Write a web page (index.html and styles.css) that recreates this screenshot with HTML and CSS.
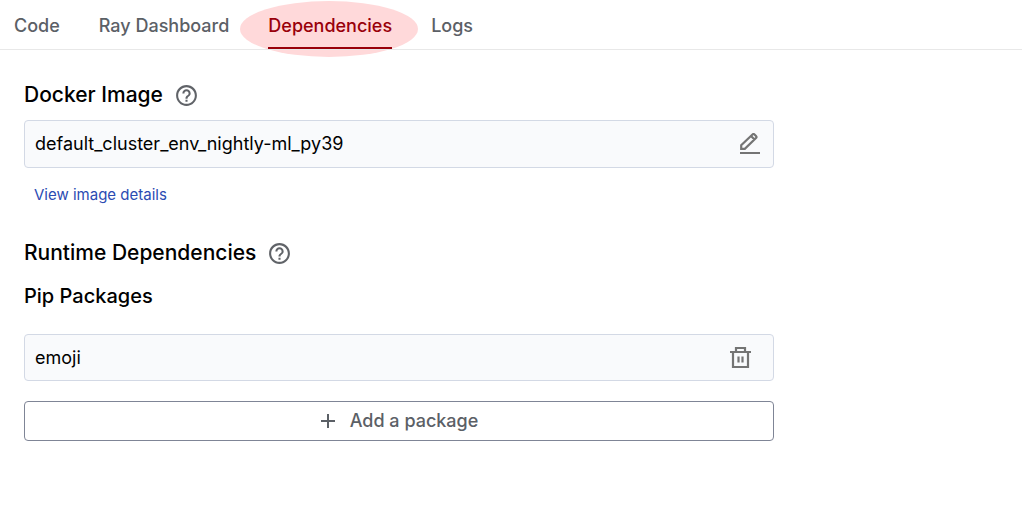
FILE: index.html
```html
<!DOCTYPE html>
<html lang="en">
<head>
<meta charset="utf-8">
<meta name="viewport" content="width=device-width, initial-scale=1">
<title>Dependencies</title>
<link rel="stylesheet" href="styles.css">
</head>
<body>
<nav class="tabs" aria-label="Workspace">
  <a class="tab" href="#code">Code</a>
  <a class="tab" href="#dashboard">Ray Dashboard</a>
  <a class="tab tab-active" href="#dependencies" aria-current="page">Dependencies</a>
  <a class="tab" href="#logs">Logs</a>
</nav>
<main class="content">
  <section class="docker">
    <div class="heading-row">
      <h2 class="heading" id="docker-label">Docker Image</h2>
      <button class="icon-button" type="button" aria-label="About Docker images">
        <svg class="help-icon" viewBox="0 0 24 24"><path d="M11 18h2v-2h-2v2zm1-16C6.480 2 2 6.480 2 12s4.480 10 10 10 10-4.480 10-10S17.520 2 12 2zm0 18c-4.410 0-8-3.590-8-8s3.590-8 8-8 8 3.590 8 8-3.590 8-8 8zm0-14c-2.210 0-4 1.790-4 4h2c0-1.100.9-2 2-2s2 .9 2 2c0 2-3 1.750-3 5h2c0-2.250 3-2.500 3-5 0-2.210-1.790-4-4-4z"/></svg>
      </button>
    </div>
    <div class="field field-image">
      <input class="field-input" type="text" aria-labelledby="docker-label" value="default_cluster_env_nightly-ml_py39" readonly>
      <button class="icon-button" type="button" aria-label="Edit image">
        <svg class="edit-icon" viewBox="0 0 20 22"><path d="M1.200 15.800V12.300L12.500 1.500q1-.9 2 0l1.500 1.500q1 1 0 2L4.800 15.800zM11 3l3.500 3.500" fill="none" stroke="currentColor" stroke-width="2.200"/><path d="M0 20h20" fill="none" stroke="currentColor" stroke-width="2"/></svg>
      </button>
    </div>
    <a class="details-link" href="#image">View image details</a>
  </section>
  <section class="runtime">
    <div class="heading-row">
      <h2 class="heading">Runtime Dependencies</h2>
      <button class="icon-button" type="button" aria-label="About runtime dependencies">
        <svg class="help-icon" viewBox="0 0 24 24"><path d="M11 18h2v-2h-2v2zm1-16C6.480 2 2 6.480 2 12s4.480 10 10 10 10-4.480 10-10S17.520 2 12 2zm0 18c-4.410 0-8-3.590-8-8s3.590-8 8-8 8 3.590 8 8-3.590 8-8 8zm0-14c-2.210 0-4 1.790-4 4h2c0-1.100.9-2 2-2s2 .9 2 2c0 2-3 1.750-3 5h2c0-2.250 3-2.500 3-5 0-2.210-1.790-4-4-4z"/></svg>
      </button>
    </div>
    <h3 class="heading subheading" id="pip-label">Pip Packages</h3>
    <div class="field field-package">
      <input class="field-input" type="text" aria-labelledby="pip-label" value="emoji">
      <button class="icon-button" type="button" aria-label="Remove package">
        <svg class="trash-icon" viewBox="0 0 22 22"><path d="M0 5h21M6 5V1h9v4M3 5v15h15V5M8.500 9.500v6M12.500 9.500v6" fill="none" stroke="currentColor" stroke-width="2.200"/></svg>
      </button>
    </div>
    <button class="add-button" type="button">
      <svg class="plus-icon" viewBox="0 0 16 16"><path d="M8 1v14M1 8h14" fill="none" stroke="currentColor" stroke-width="2"/></svg>
      Add a package
    </button>
  </section>
</main>
</body>
</html>
```
FILE: styles.css
```css
* {
  box-sizing: border-box;
}

body {
  margin: 0;
  background: #fff;
  color: #000;
  font-family: Inter, "Liberation Sans", sans-serif;
}

.tabs {
  display: flex;
  gap: 39px;
  padding: 0 14px;
  border-bottom: 1px solid #e8e8e8;
}

.tab {
  position: relative;
  padding: 14px 0 9px;
  border-bottom: 2px solid transparent;
  color: #5b6066;
  font-size: 18px;
  font-weight: 500;
  line-height: 24px;
  text-decoration: none;
}

.tab-active {
  border-color: #99000a;
  color: #99000a;
}

.tab-active::before {
  position: absolute;
  z-index: -1;
  inset: 1px -26px -10px -28px;
  border-radius: 50%;
  background: #ffd9da;
  content: "";
}

.content {
  max-width: 798px;
  padding: 31px 24px;
}

.heading-row {
  display: flex;
  align-items: center;
  gap: 11px;
}

.heading {
  margin: 0;
  font-size: 21px;
  font-weight: 500;
  line-height: 28px;
}

.icon-button {
  display: flex;
  padding: 0;
  border: 0;
  background: none;
  color: #747474;
}

.help-icon {
  width: 25px;
  height: 25px;
  fill: #606368;
}

.field {
  display: flex;
  align-items: center;
  border: 1px solid #d3d9e5;
  border-radius: 4px;
  background: #f9fafc;
}

.field-image {
  height: 48px;
  margin-top: 11px;
  padding: 0 13px 0 10px;
}

.field-package {
  height: 47px;
  margin-top: 24px;
  padding: 0 21px 0 10px;
}

.field-input {
  flex: 1;
  min-width: 0;
  padding: 0;
  border: 0;
  background: none;
  color: #000;
  font: 400 18px/24px Inter, "Liberation Sans", sans-serif;
}

.edit-icon {
  width: 20px;
  height: 22px;
}

.trash-icon {
  width: 22px;
  height: 22px;
}

.details-link {
  display: inline-block;
  margin: 17px 10px 0;
  color: #2b4bb3;
  font-size: 15px;
  line-height: 20px;
  text-decoration: none;
}

.runtime {
  margin-top: 34px;
}

.subheading {
  margin-top: 15px;
  font-size: 20px;
}

.add-button {
  display: flex;
  align-items: center;
  justify-content: center;
  gap: 14px;
  width: 100%;
  height: 40px;
  margin-top: 20px;
  border: 1px solid #7f8596;
  border-radius: 4px;
  background: #fff;
  color: #5b6066;
  font: 500 18px/24px Inter, "Liberation Sans", sans-serif;
}

.plus-icon {
  width: 16px;
  height: 16px;
}
```
